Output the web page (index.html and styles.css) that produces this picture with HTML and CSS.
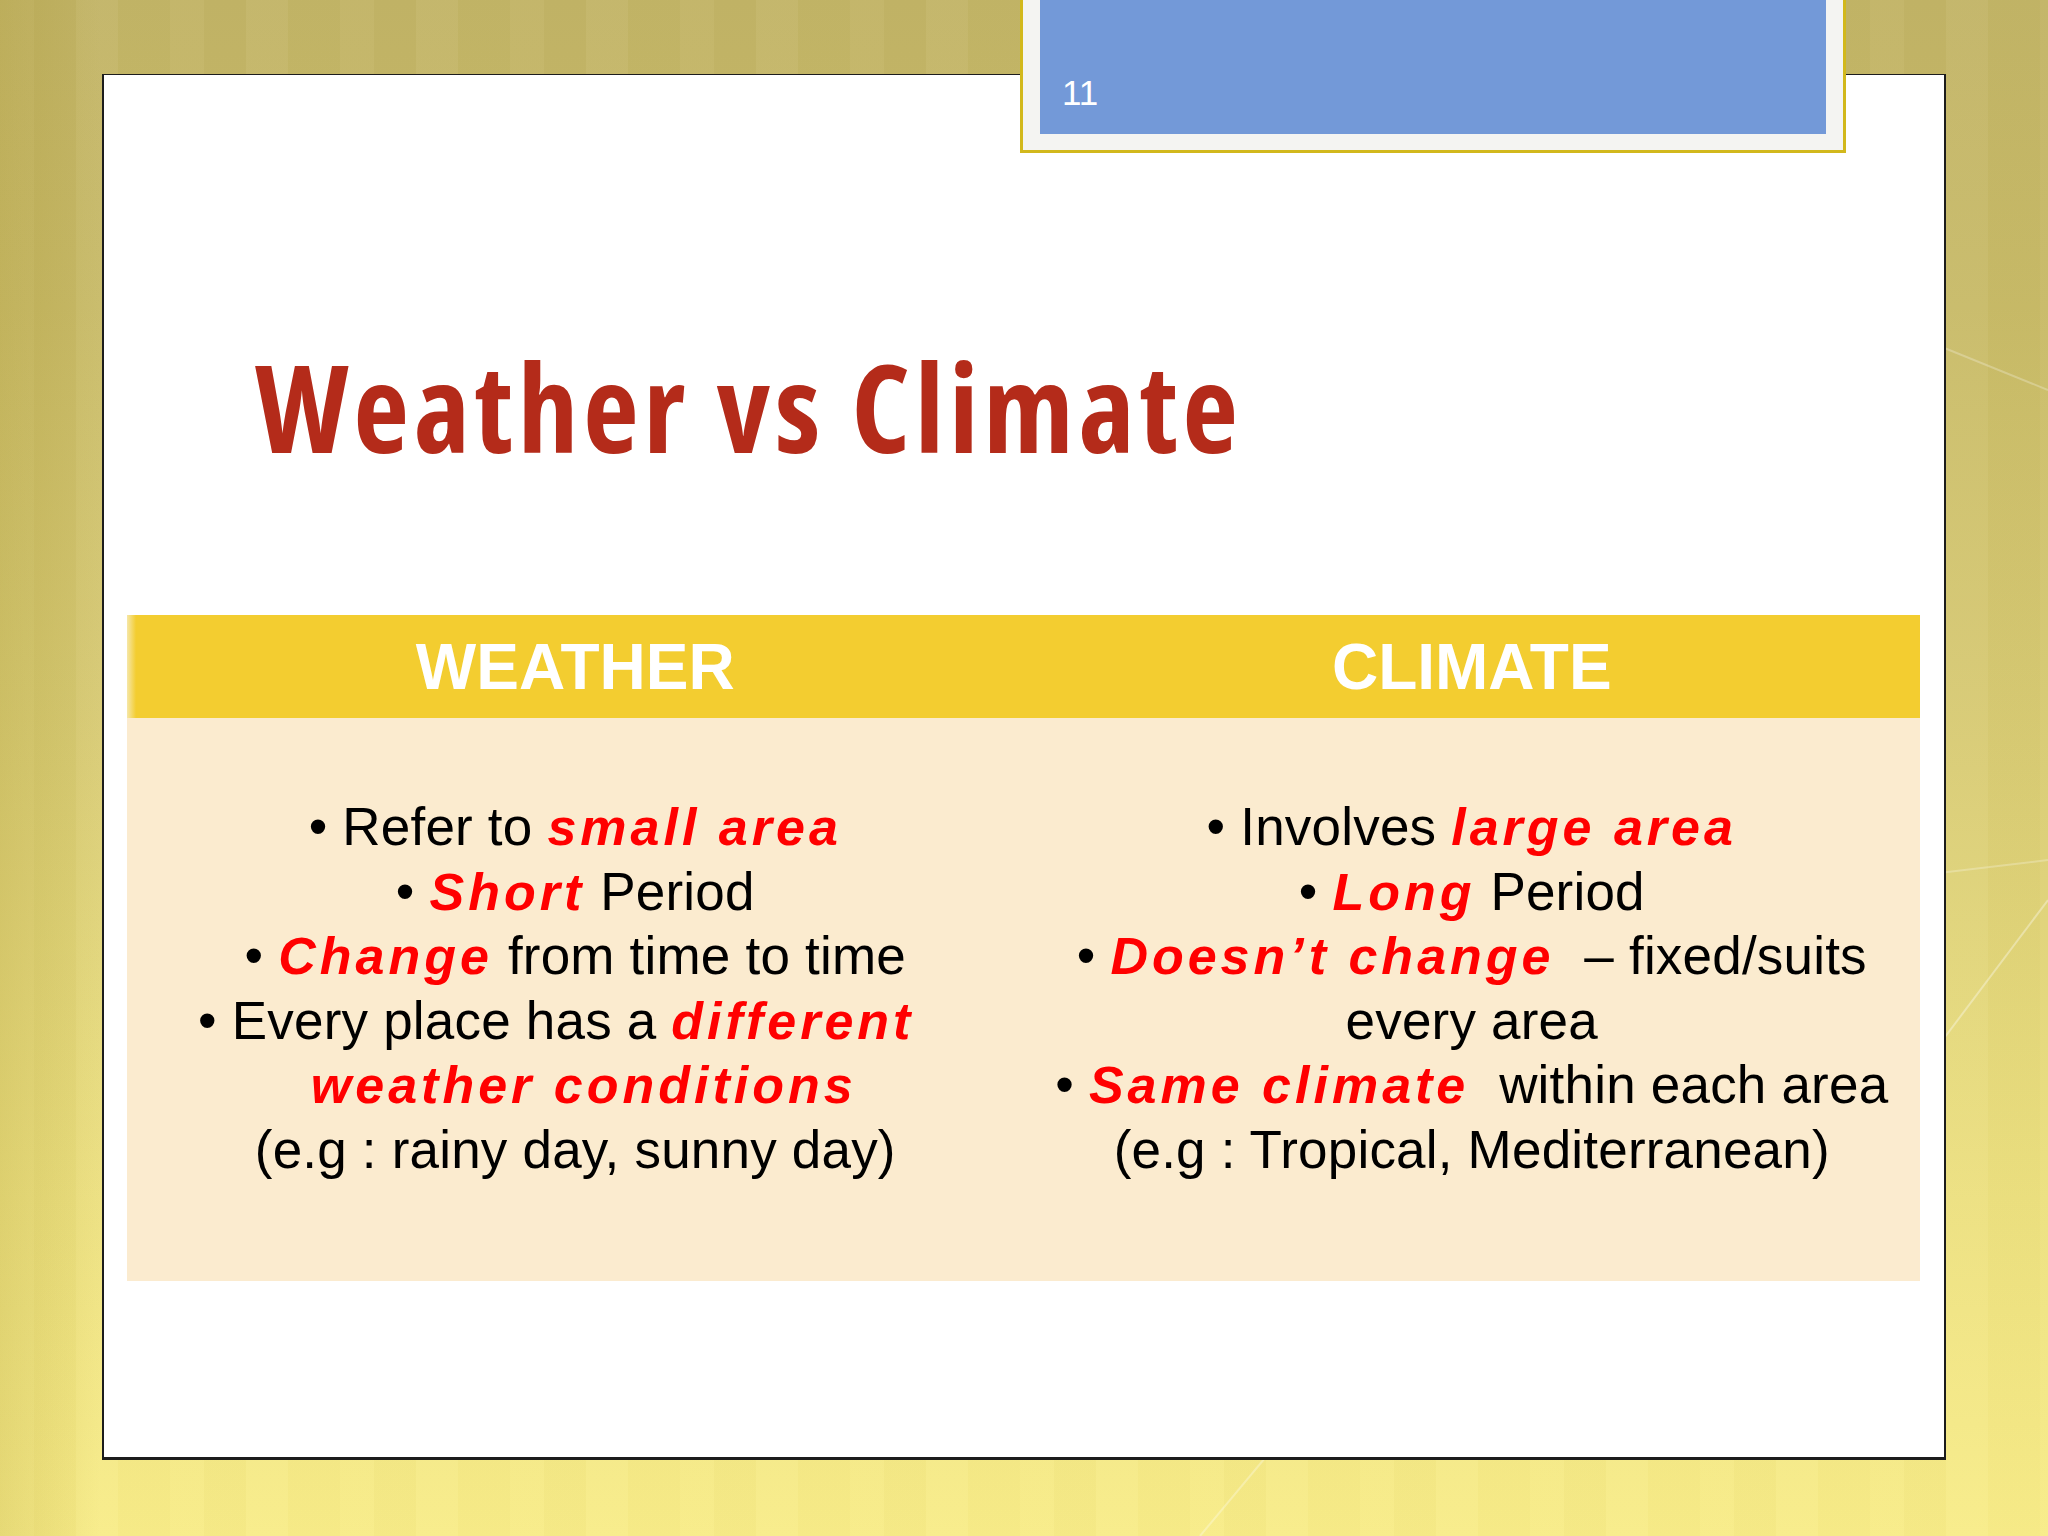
FILE: index.html
```html
<!DOCTYPE html>
<html lang="en">
<head>
<meta charset="utf-8">
<title>Weather vs Climate</title>
<link rel="stylesheet" href="styles.css">
</head>
<body>
<div class="stage">
  <svg class="deco" width="2048" height="1536" viewBox="0 0 2048 1536" aria-hidden="true">
    <path d="M1860 1150 L2048 900" stroke="rgba(255,255,255,0.35)" stroke-width="2" fill="none"/>
    <path d="M1900 330 L2048 390" stroke="rgba(255,255,255,0.25)" stroke-width="2" fill="none"/>
    <path d="M1880 880 L2048 860" stroke="rgba(255,255,255,0.25)" stroke-width="2" fill="none"/>
    <path d="M1200 1536 L1330 1380" stroke="rgba(255,255,255,0.3)" stroke-width="2" fill="none"/>
  </svg>
  <div class="slide">
    <h1 class="title">Weather vs Climate</h1>
    <div class="table">
      <div class="th">WEATHER</div>
      <div class="th">CLIMATE</div>
      <div class="td">
        <ul class="list">
          <li>Refer to <span class="em">small area</span></li>
          <li><span class="em">Short</span> Period</li>
          <li><span class="em">Change</span> from time to time</li>
          <li class="hang">Every place has a <span class="em">different</span><br><span class="em">weather conditions</span></li>
          <li class="plain">(e.g : rainy day, sunny day)</li>
        </ul>
      </div>
      <div class="td">
        <ul class="list">
          <li>Involves <span class="em">large area</span></li>
          <li><span class="em">Long</span> Period</li>
          <li><span class="em">Doesn’t change</span>&nbsp; – fixed/suits<br>every area</li>
          <li><span class="em">Same climate</span>&nbsp; within each area</li>
          <li class="plain">(e.g : Tropical, Mediterranean)</li>
        </ul>
      </div>
    </div>
  </div>
  <div class="tab">
    <div class="tab-inner"><span class="num">11</span></div>
  </div>
</div>
</body>
</html>
```

FILE: styles.css
```css
html, body {
  margin: 0;
  padding: 0;
}

body {
  width: 2048px;
  height: 1536px;
  overflow: hidden;
  font-family: "Liberation Sans", Arial, sans-serif;
  background:
    linear-gradient(to right, rgba(160, 140, 30, 0.20) 0, rgba(160, 140, 30, 0) 100px),
    repeating-linear-gradient(to right,
      rgba(255, 255, 255, 0.03) 0 34px,
      rgba(0, 0, 0, 0.012) 34px 76px,
      rgba(255, 255, 255, 0.045) 76px 118px,
      rgba(0, 0, 0, 0.006) 118px 170px),
    linear-gradient(to bottom, #c2b466 0%, #c8ba67 20%, #d9cc74 50%, #ece07f 78%, #f8ec88 100%);
}

.stage {
  position: relative;
  width: 2048px;
  height: 1536px;
  box-sizing: border-box;
  padding: 74px 0 0 102px;
}

.deco {
  position: absolute;
  left: 0;
  top: 0;
}

.slide {
  position: relative;
  width: 1844px;
  height: 1386px;
  box-sizing: border-box;
  background: #ffffff;
  border: 2px solid #1c1c1c;
  border-top-width: 1px;
  border-bottom-width: 3px;
  padding: 0 24px 0 23px;
}

.title {
  margin: 0;
  padding: 273px 0 0 128px;
  font-family: "Open Sans", "Liberation Sans", Arial, sans-serif;
  font-weight: 700;
  font-stretch: 75%;
  font-size: 121px;
  line-height: 117px;
  letter-spacing: 4.8px;
  color: #b42b1a;
}

.table {
  margin-top: 150px;
  display: grid;
  grid-template-columns: 1fr 1fr;
}

.th {
  height: 103px;
  display: flex;
  align-items: center;
  justify-content: center;
  background: #f3cd30;
  color: #ffffff;
  font-weight: bold;
  font-size: 64px;
  line-height: 1;
}

.th:first-child {
  background: linear-gradient(to right, #f6e7a8 0, #f3cd30 9px);
}

.td {
  height: 563px;
  box-sizing: border-box;
  padding-top: 77px;
  background: #fbebcf;
}

.list {
  margin: 0;
  padding: 0;
  list-style: none;
  text-align: center;
  font-size: 53px;
  line-height: 64.5px;
  letter-spacing: 0.2px;
  color: #000000;
}

.list li::before {
  content: "• ";
}

.list li.plain::before {
  content: none;
}

.list li.hang {
  padding-left: 17px;
  text-indent: -55px;
}

.em {
  color: #ff0000;
  font-size: 52px;
  font-weight: bold;
  font-style: italic;
  letter-spacing: 4px;
}

.tab {
  position: absolute;
  left: 1020px;
  top: 0;
  width: 826px;
  height: 153px;
  box-sizing: border-box;
  border: 3px solid #d2b81c;
  border-top: none;
  background: #f4f4f2;
  padding: 0 17px 16px;
}

.tab-inner {
  height: 100%;
  box-sizing: border-box;
  background: #7399d8;
  padding: 75px 0 0 22px;
}

.num {
  display: block;
  color: #ffffff;
  font-size: 35px;
  line-height: 1;
}
```
